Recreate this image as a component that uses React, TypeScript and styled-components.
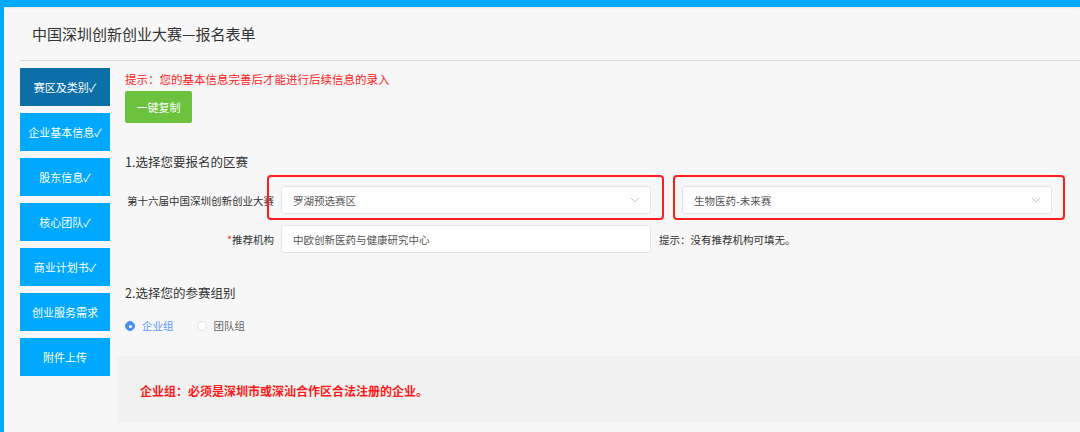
import React from "react";
import styled, { createGlobalStyle } from "styled-components";

const blue = "#00a8ff";
const font = `"Noto Sans CJK SC", "Noto Sans", sans-serif`;

const GlobalStyle = createGlobalStyle`
  html, body {
    margin: 0;
    padding: 0;
    background: #f7f7f7;
    font-family: ${font};
  }
`;

const steps = [
  "赛区及类别✓",
  "企业基本信息✓",
  "股东信息✓",
  "核心团队✓",
  "商业计划书✓",
  "创业服务需求",
  "附件上传",
];

const ChevronDown = () => (
  <svg width="10" height="6" viewBox="0 0 10 6">
    <polyline points="1,1 5,5 9,1" fill="none" stroke="#c0c4cc" strokeWidth="1" />
  </svg>
);

const App = () => {
  return (
    <Page>
      <GlobalStyle />
      <TopBar />
      <Body>
        <LeftStrip />
        <Main>
          <Header>中国深圳创新创业大赛—报名表单</Header>
          <Columns>
            <Sidebar>
              {steps.map((s, i) => (
                <StepItem key={s} active={i === 0}>
                  {s}
                </StepItem>
              ))}
            </Sidebar>
            <Content>
              <Form>
                <Hint>提示：您的基本信息完善后才能进行后续信息的录入</Hint>
                <CopyButton>一键复制</CopyButton>
                <SectionTitle>1.选择您要报名的区赛</SectionTitle>
                <FieldRow>
                  <Label>第十六届中国深圳创新创业大赛</Label>
                  <Marked>
                    <Select>
                      <span>罗湖预选赛区</span>
                      <ChevronDown />
                    </Select>
                  </Marked>
                  <Marked second>
                    <Select>
                      <span>生物医药-未来赛</span>
                      <ChevronDown />
                    </Select>
                  </Marked>
                </FieldRow>
                <FieldRow gap={11}>
                  <Label>
                    <Star>*</Star>推荐机构
                  </Label>
                  <Input>中欧创新医药与健康研究中心</Input>
                  <SideTip>提示：没有推荐机构可填无。</SideTip>
                </FieldRow>
                <SectionTitle top={31}>2.选择您的参赛组别</SectionTitle>
                <RadioRow>
                  <RadioOption checked>
                    <RadioDot checked />
                    企业组
                  </RadioOption>
                  <RadioOption>
                    <RadioDot />
                    团队组
                  </RadioOption>
                </RadioRow>
              </Form>
              <Notice>企业组：必须是深圳市或深汕合作区合法注册的企业。</Notice>
            </Content>
          </Columns>
        </Main>
      </Body>
    </Page>
  );
};

const Page = styled.div`
  width: 1080px;
  height: 432px;
  overflow: hidden;
  background: #f7f7f7;
`;

const TopBar = styled.div`
  height: 7px;
  background: ${blue};
  box-shadow: 0 1px 2px rgba(0, 0, 0, 0.08);
`;

const Body = styled.div`
  display: flex;
  height: 425px;
`;

const LeftStrip = styled.div`
  width: 4px;
  background: ${blue};
`;

const Main = styled.div`
  flex: 1;
  padding-left: 16px;
`;

const Header = styled.div`
  height: 53px;
  display: flex;
  align-items: center;
  padding-left: 12px;
  border-bottom: 1px solid #d6d6d6;
  font-size: 15px;
  color: #333;
`;

const Columns = styled.div`
  display: flex;
  margin-top: 7px;
`;

const Sidebar = styled.div`
  width: 90px;
  display: flex;
  flex-direction: column;
  gap: 7px;
`;

const StepItem = styled.div<{ active?: boolean }>`
  height: 38px;
  display: flex;
  align-items: center;
  justify-content: center;
  background: ${(p) => (p.active ? "#0d6fa7" : blue)};
  color: #fff;
  font-size: 11px;
`;

const Content = styled.div`
  flex: 1;
  margin-left: 7px;
`;

const Form = styled.div`
  padding-left: 8px;
  padding-top: 3px;
  display: flex;
  flex-direction: column;
  align-items: flex-start;
`;

const Hint = styled.div`
  font-size: 11.5px;
  line-height: 16px;
  color: #ff2222;
`;

const CopyButton = styled.div`
  margin-top: 4px;
  width: 67px;
  height: 32px;
  border-radius: 2px;
  background: #6bc33d;
  color: #fff;
  font-size: 11px;
  display: flex;
  align-items: center;
  justify-content: center;
`;

const SectionTitle = styled.div<{ top?: number }>`
  margin-top: ${(p) => p.top ?? 30}px;
  font-size: 12.5px;
  line-height: 18px;
  color: #333;
`;

const FieldRow = styled.div<{ gap?: number }>`
  margin-top: ${(p) => p.gap ?? 15}px;
  display: flex;
  align-items: center;
`;

const Label = styled.div`
  width: 149px;
  margin-right: 7px;
  text-align: right;
  font-size: 10.5px;
  color: #333;
  white-space: nowrap;
`;

const Star = styled.span`
  color: #ff2a2a;
`;

const Marked = styled.div<{ second?: boolean }>`
  position: relative;
  margin-left: ${(p) => (p.second ? 31 : 0)}px;
  &::after {
    content: "";
    position: absolute;
    top: -11px;
    bottom: -6px;
    left: ${(p) => (p.second ? -9 : -14)}px;
    right: ${(p) => (p.second ? -13 : -13)}px;
    border: 2px solid #ff1d1d;
    border-radius: 4px;
    pointer-events: none;
  }
`;

const fieldBox = `
  width: 370px;
  height: 28px;
  box-sizing: border-box;
  background: #fff;
  border: 1px solid #e2e4e8;
  border-radius: 3px;
  display: flex;
  align-items: center;
  font-size: 10.5px;
  color: #555;
`;

const Select = styled.div`
  ${fieldBox}
  justify-content: space-between;
  padding: 0 10px 0 11px;
`;

const Input = styled.div`
  ${fieldBox}
  padding-left: 11px;
`;

const SideTip = styled.div`
  margin-left: 8px;
  font-size: 10.5px;
  color: #333;
`;

const RadioRow = styled.div`
  margin-top: 16px;
  display: flex;
  align-items: center;
  gap: 23px;
  line-height: 16px;
`;

const RadioOption = styled.div<{ checked?: boolean }>`
  display: flex;
  align-items: center;
  gap: 7px;
  font-size: 10.5px;
  color: ${(p) => (p.checked ? "#5b9cf6" : "#666")};
`;

const RadioDot = styled.span<{ checked?: boolean }>`
  width: 10px;
  height: 10px;
  box-sizing: border-box;
  border-radius: 50%;
  background: ${(p) => (p.checked ? "#4a90f0" : "#fff")};
  border: 1px solid ${(p) => (p.checked ? "#4a90f0" : "#e0e3e8")};
  display: flex;
  align-items: center;
  justify-content: center;
  &::after {
    content: "";
    width: 3px;
    height: 3px;
    border-radius: 50%;
    background: ${(p) => (p.checked ? "#fff" : "transparent")};
  }
`;

const Notice = styled.div`
  margin-top: 22px;
  background: #f1f1f1;
  padding: 26px 0 23px 23px;
  font-size: 12px;
  line-height: 18px;
  font-weight: bold;
  color: #ff1a1a;
`;

export default App;
